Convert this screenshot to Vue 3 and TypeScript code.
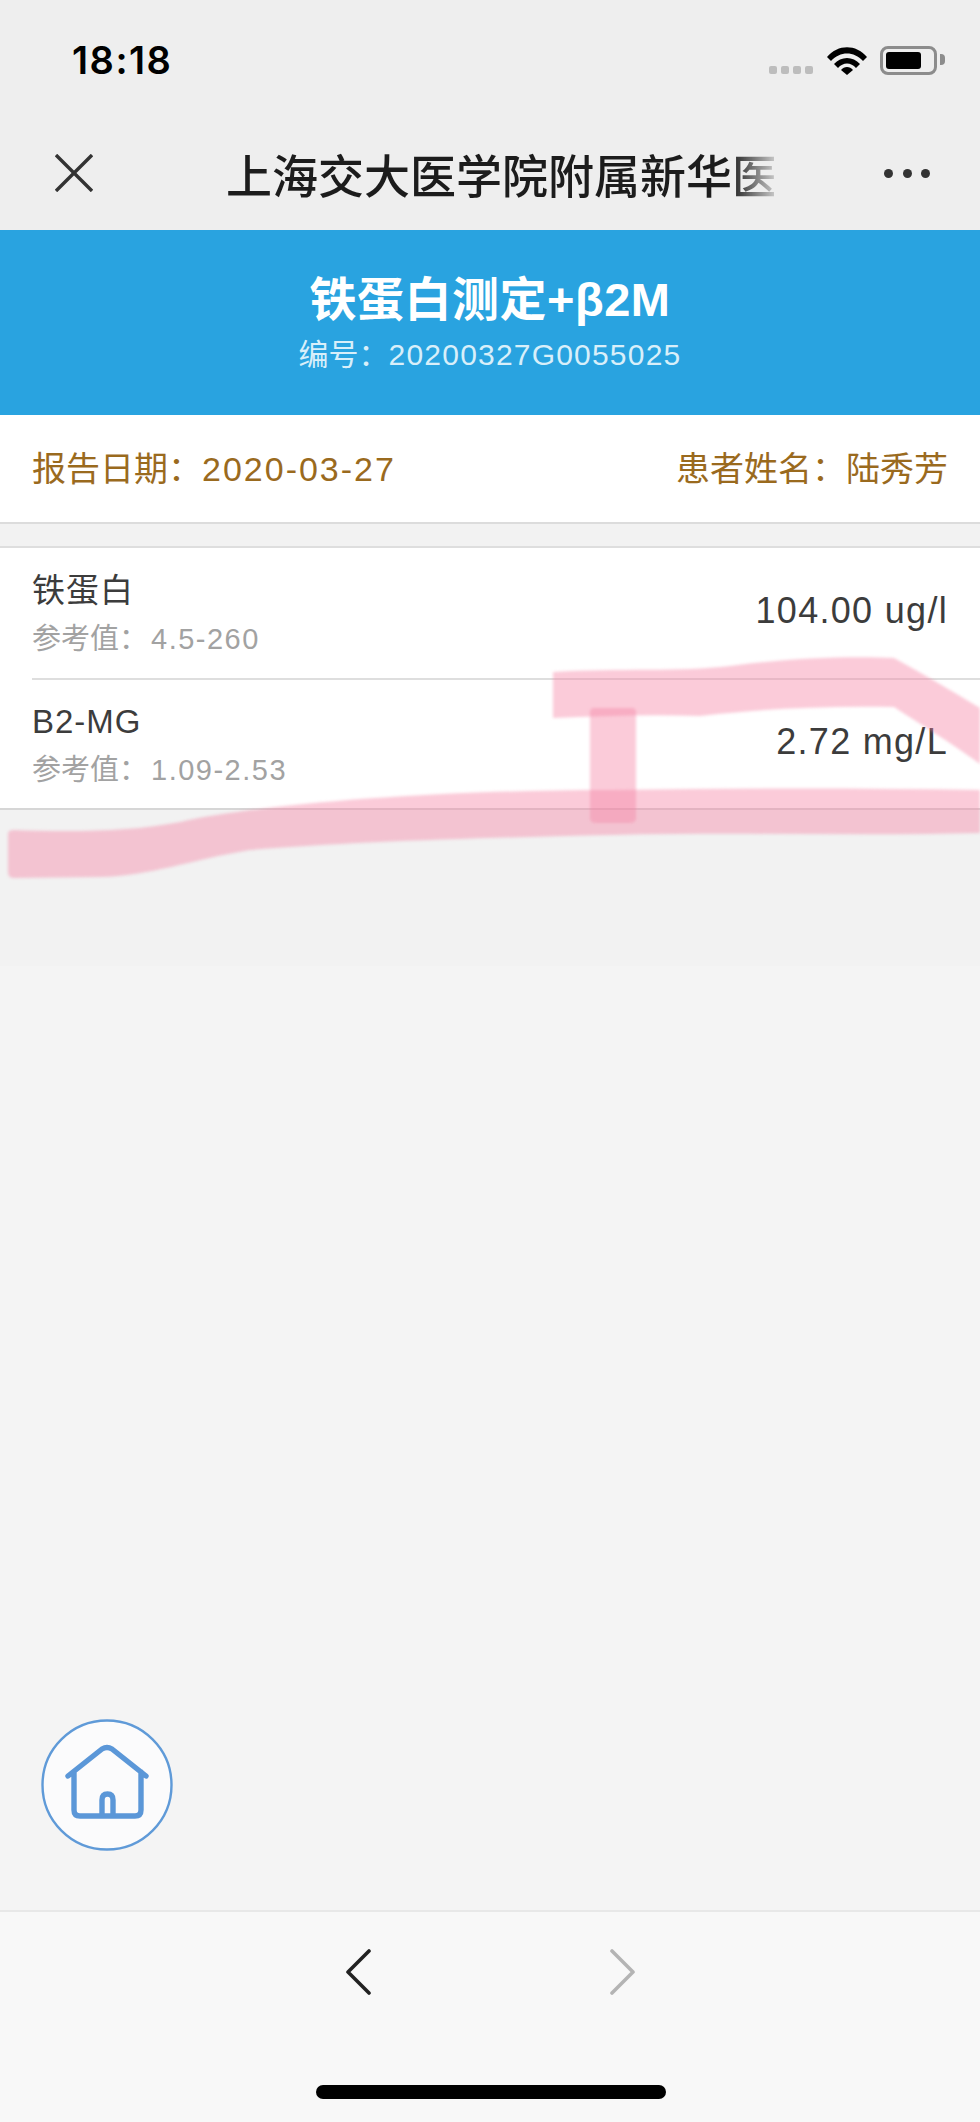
<script setup lang="ts">
type ReportItem = {
  name: string
  range: string
  value: string
}

const items: ReportItem[] = [
  { name: '铁蛋白', range: '4.5-260', value: '104.00 ug/l' },
  { name: 'B2-MG', range: '1.09-2.53', value: '2.72 mg/L' },
]
</script>

<template>
  <div class="page">
    <header class="topbar">
      <div class="status">
        <span class="status__time">18:18</span>
        <div class="status__icons">
          <div class="signal"><i></i><i></i><i></i><i></i></div>
          <svg class="wifi" width="40" height="29" viewBox="0 0 40 29">
            <path d="M0 11 C11 -2 29 -2 40 11 L36 15 C27 5 13 5 4 15 Z" fill="#000" />
            <path d="M7 18 C14 10 26 10 33 18 L29 22 C24 16 16 16 11 22 Z" fill="#000" />
            <path d="M14 24 C17 20 23 20 26 24 L20 29 Z" fill="#000" />
          </svg>
          <div class="battery"><div class="battery__level"></div></div>
        </div>
      </div>
      <div class="nav">
        <div class="nav__close">
          <svg width="38" height="38" viewBox="0 0 38 38">
            <path d="M1 1 L37 37 M37 1 L1 37" stroke="#333" stroke-width="3.4" fill="none" />
          </svg>
        </div>
        <div class="nav__title">上海交大医学院附属新华医院</div>
        <div class="nav__more"><i></i><i></i><i></i></div>
      </div>
    </header>

    <section class="hero">
      <h1 class="hero__title">铁蛋白测定+β2M</h1>
      <p class="hero__code">编号：<span class="hero__num">20200327G0055025</span></p>
    </section>

    <section class="info">
      <span>报告日期：<span class="info__num">2020-03-27</span></span>
      <span>患者姓名：陆秀芳</span>
    </section>

    <section class="list">
      <div v-for="item in items" :key="item.name" class="row">
        <div class="row__left">
          <div class="row__name">{{ item.name }}</div>
          <div class="row__range">参考值：<span class="row__num">{{ item.range }}</span></div>
        </div>
        <div class="row__value">{{ item.value }}</div>
      </div>
    </section>

    <main class="content">
      <svg class="home" width="134" height="134" viewBox="0 0 134 134">
        <circle cx="67" cy="67" r="64.5" fill="#fbfbfc" stroke="#5f9ad8" stroke-width="2.4" />
        <path
          d="M28 58 L62 31 Q67 28 72 31 L106 58 M34 54 V92 Q34 98 40 98 H95 Q101 98 101 92 V54 M62 97 V82 Q62 76 67.500 76 Q73 76 73 82 V97"
          fill="none"
          stroke="#5b97d8"
          stroke-width="5.4"
          stroke-linecap="round"
          stroke-linejoin="round"
        />
      </svg>
    </main>

    <footer class="toolbar">
      <div class="toolbar__arrows">
        <svg width="26" height="46" viewBox="0 0 26 46">
          <path d="M23 2 L2 23 L23 44" fill="none" stroke="#222" stroke-width="3.6" stroke-linecap="round" stroke-linejoin="round" />
        </svg>
        <svg width="26" height="46" viewBox="0 0 26 46">
          <path d="M3 2 L24 23 L3 44" fill="none" stroke="#b4b4b4" stroke-width="3.6" stroke-linecap="round" stroke-linejoin="round" />
        </svg>
      </div>
      <div class="toolbar__home"></div>
    </footer>

    <!-- pink marker scribbled over the screenshot -->
    <svg class="marker" width="980" height="260" viewBox="0 650 980 260">
      <path d="M553 672 C620 668 680 672 730 666 C790 658 850 656 894 658 C920 672 950 690 980 708 V764 C950 742 920 724 894 707 C830 706 770 708 700 716 C650 714 600 716 553 718 Z" />
      <path d="M590 712 Q590 708 594 708 H632 Q636 708 636 712 V818 Q636 823 630 823 H596 Q590 823 590 818 Z" />
      <path d="M8 834 Q8 830 14 830 C70 832 130 832 180 822 C250 806 420 790 612 790 C740 788 860 788 980 790 V833 C860 836 740 832 612 835 C470 838 350 842 250 850 C190 860 150 876 100 877 L14 878 Q8 878 8 872 Z" />
    </svg>
  </div>
</template>

<style scoped>
.page {
  position: relative;
  display: flex;
  flex-direction: column;
  width: 980px;
  height: 2122px;
  overflow: hidden;
  background: linear-gradient(#f2f2f2 966px, #f4f4f4 966px);
  font-family: "Liberation Sans", "Noto Sans CJK SC", sans-serif;
}
.topbar {
  height: 230px;
  flex: none;
  background: #eeeeee;
}
.status {
  display: flex;
  justify-content: space-between;
  align-items: center;
  height: 120px;
  padding: 0 43px 0 72px;
}
.status__time {
  font-family: Inter, sans-serif;
  font-size: 38px;
  font-weight: 600;
  letter-spacing: 1.500px;
  color: #000;
}
.status__icons {
  display: flex;
  align-items: center;
}
.signal {
  display: flex;
  gap: 4px;
  margin: 20px 14px 0 0;
}
.signal i {
  width: 8px;
  height: 8px;
  border-radius: 2px;
  background: #bdbdbd;
}
.wifi {
  margin-right: 13px;
}
.battery {
  position: relative;
  width: 57px;
  height: 29px;
  box-sizing: border-box;
  padding: 3px;
  border: 3px solid #8c8c8c;
  border-radius: 8px;
}
.battery::after {
  content: "";
  position: absolute;
  right: -11px;
  top: 5px;
  width: 5px;
  height: 11px;
  background: #8c8c8c;
  border-radius: 0 4px 4px 0;
}
.battery__level {
  width: 35px;
  height: 100%;
  background: #000;
  border-radius: 3px;
}
.nav {
  display: flex;
  align-items: center;
  height: 106px;
}
.nav__close {
  display: flex;
  width: 226px;
  padding-left: 55px;
  box-sizing: border-box;
}
.nav__title {
  width: 548px;
  overflow: hidden;
  white-space: nowrap;
  font-size: 46px;
  font-weight: 500;
  color: #1c1c1c;
  -webkit-mask-image: linear-gradient(90deg, #000 92%, rgba(0, 0, 0, 0.2) 100%);
  mask-image: linear-gradient(90deg, #000 92%, rgba(0, 0, 0, 0.2) 100%);
}
.nav__more {
  display: flex;
  gap: 9.500px;
  margin-left: 110px;
}
.nav__more i {
  width: 9px;
  height: 9px;
  border-radius: 50%;
  background: #333;
}
.hero {
  height: 185px;
  flex: none;
  background: #29a3e0;
  color: #fff;
  text-align: center;
}
.hero__title {
  margin: 0;
  padding-top: 41px;
  font-size: 47px;
  line-height: 58px;
  font-weight: 700;
  letter-spacing: 0.500px;
}
.hero__code {
  margin: 6px 0 0;
  font-size: 30px;
  line-height: 40px;
  color: #d8effa;
}
.hero__num {
  letter-spacing: 1.200px;
}
.info {
  display: flex;
  justify-content: space-between;
  align-items: center;
  height: 109px;
  flex: none;
  padding: 0 32px 4px;
  box-sizing: border-box;
  background: #fff;
  border-bottom: 2px solid #dcdcdc;
  font-size: 34px;
  color: #9a6a1e;
}
.info__num {
  letter-spacing: 2px;
}
.list {
  flex: none;
  margin-top: 22px;
  background: #fff;
  border-top: 2px solid #dedede;
  border-bottom: 2px solid #d6d6d6;
}
.row {
  position: relative;
  display: flex;
  justify-content: space-between;
  align-items: center;
  height: 130px;
  padding: 0 32px;
  box-sizing: border-box;
}
.row + .row {
  border-top: 2px solid #dedede;
  margin-left: 32px;
  padding-left: 0;
}
.row__left {
  margin-top: 3px;
}
.row__name {
  font-size: 33px;
  line-height: 42px;
  letter-spacing: 1px;
  color: #3c3c3c;
  margin-top: -2px;
}
.row__range {
  margin-top: 8px;
  font-size: 29px;
  line-height: 38px;
  color: #a2a2a2;
}
.row__num {
  letter-spacing: 1.500px;
  margin-left: 3px;
}
.row__value {
  font-size: 36px;
  letter-spacing: 1.300px;
  color: #3c3c3c;
  margin-top: -4px;
}
.content {
  position: relative;
  flex: 1;
}
.home {
  position: absolute;
  left: 40px;
  bottom: 58px;
}
.toolbar {
  flex: none;
  height: 210px;
  background: #f8f8f8;
  border-top: 2px solid #e8e8e8;
}
.toolbar__arrows {
  display: flex;
  justify-content: center;
  gap: 237px;
  padding-top: 37px;
}
.toolbar__home {
  width: 350px;
  height: 14px;
  margin: 90px 0 0 316px;
  border-radius: 7px;
  background: #000;
}
.marker {
  position: absolute;
  left: 0;
  top: 650px;
  pointer-events: none;
  filter: blur(1.500px);
}
.marker path {
  fill: rgba(246, 130, 165, 0.42);
}
</style>
